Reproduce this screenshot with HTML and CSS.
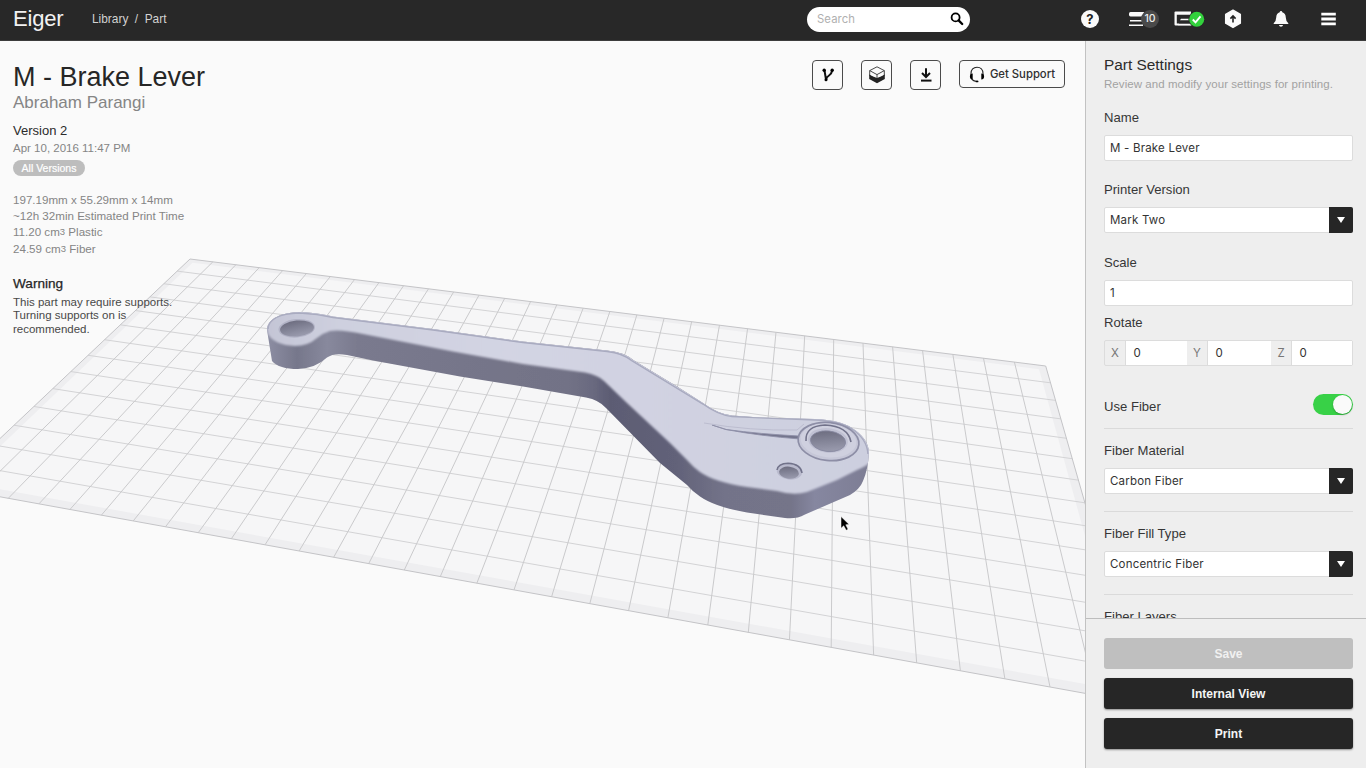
FILE: index.html
```html
<!DOCTYPE html>
<html lang="en">
<head>
<meta charset="utf-8">
<title>Eiger - M - Brake Lever</title>
<link rel="stylesheet" href="styles.css">
</head>
<body>
<header class="topbar">
  <div class="brand">Eiger</div>
  <nav class="crumbs"><span>Library</span><span>/</span><span>Part</span></nav>
  <div class="search"><span>Search</span>
    <svg width="14" height="14" viewBox="0 0 14 14"><circle cx="5.6" cy="5.4" r="4" fill="none" stroke="#000" stroke-width="1.8"/><path d="M8.6 8.4 12.2 12" stroke="#000" stroke-width="2.3" stroke-linecap="round"/></svg>
  </div>
  <div class="tools">
    <div class="help">?</div>
    <div class="queue">
      <svg width="16" height="16" viewBox="0 0 16 16" fill="#fafafa"><path d="M1.5 1H15v2.8L13.5 5.600H1.500Q0 5.600 0 3.800V2.500Q0 1 1.500 1Z"/><path d="M1 9h13v1.400H1zM0 13.500h14v1.500H0z"/></svg>
      <span class="badge">10</span>
    </div>
    <svg class="printer" width="31" height="18" viewBox="0 0 31 18"><path d="M1.500 1.500H17v14H1.500q-1 0-1-1V2.500q0-1 1-1Z" fill="#fafafa"/><path d="M2.800 4.700H16v10H5.500l-1-1.200H2.800z" fill="#282828"/><path d="M7 8.700h9v1.500H6zM4 13.700h14v1.500H4z" fill="#fafafa"/><circle cx="22.700" cy="9.200" r="8.200" fill="#282828"/><circle cx="22.700" cy="9.200" r="7.500" fill="#32d13c"/><path d="m18.800 9.500 2.700 2.800 5-5.900" fill="none" stroke="#fff" stroke-width="1.900"/></svg>
    <svg class="hex" width="18" height="20" viewBox="0 0 18 20"><path d="M9 1.200 16.300 5.400v8.800L9 18.400 1.700 14.200V5.400Z" fill="#fafafa" stroke="#fafafa" stroke-width="1.500" stroke-linejoin="round"/><path d="M9 13.500V7.500M6.400 9.600 9 6.900l2.600 2.700" fill="none" stroke="#222" stroke-width="1.600"/></svg>
    <svg class="bell" width="16" height="18" viewBox="0 0 16 18" fill="#fafafa"><path d="M8 1q1.200 0 1.300 1.300Q12.600 3.400 12.800 7.500q.1 4 2.500 5.700v.9H.7v-.9q2.400-1.700 2.500-5.700Q3.400 3.400 6.700 2.300 6.800 1 8 1ZM5.900 15h4.200Q9.600 16.800 8 16.800T5.900 15Z"/></svg>
    <svg class="menu" width="15" height="14" viewBox="0 0 15 14" fill="#fff"><path d="M.3.800h14.500v2.800H.3zM.3 5.600h14.500v2.800H.3zM.3 10.400h14.500v2.800H.3z"/></svg>
  </div>
</header>
<main class="workspace">
  <section class="viewer">
    <svg class="scene" width="1085" height="727" viewBox="0 41 1085 727">
      <defs>
        <linearGradient id="side" gradientUnits="userSpaceOnUse" x1="267" y1="0" x2="869" y2="0">
          <stop offset="0" stop-color="#8d8ea3"/><stop offset=".05" stop-color="#76778b"/><stop offset=".1" stop-color="#88899d"/><stop offset=".15" stop-color="#7a7a8e"/><stop offset=".5" stop-color="#727286"/><stop offset=".54" stop-color="#6a6a80"/><stop offset=".57" stop-color="#5c5c73"/><stop offset=".68" stop-color="#626279"/><stop offset=".76" stop-color="#737389"/><stop offset=".87" stop-color="#747489"/><stop offset=".91" stop-color="#8687a0"/><stop offset="1" stop-color="#7d7d94"/>
        </linearGradient>
        <linearGradient id="face" gradientUnits="userSpaceOnUse" x1="267" y1="0" x2="869" y2="0"><stop offset="0" stop-color="#c4c5d6"/><stop offset=".12" stop-color="#ced0df"/><stop offset=".4" stop-color="#d3d4e3"/><stop offset="1" stop-color="#cdcfdf"/></linearGradient>
        <linearGradient id="hole" x1="0" y1="0" x2=".3" y2="1"><stop offset="0" stop-color="#68687b"/><stop offset=".6" stop-color="#848598"/><stop offset="1" stop-color="#9798ab"/></linearGradient>
        <filter id="soft" x="-5%" y="-5%" width="110%" height="110%"><feGaussianBlur stdDeviation="1.300"/></filter>
        <filter id="fine" x="-20%" y="-20%" width="140%" height="140%"><feGaussianBlur stdDeviation=".6"/></filter>
        <clipPath id="body"><path id="outline" d="M267 330C267 319 281 312 302 312Q320 313 333 316.500L433 329 523 341.500 607 350.500Q624 352 634 360.500L677 386.500 703 403Q718 414 732 415.500L760 417.500 815 419Q840 420 852 428 868 438 869 452 868 470 863 481 860 489 850 495L805 514.500Q796 519.500 785 518L747 512.500Q715 507 700 496.500 692 491 687 485L660 463 606 408Q599 400 586 397.500L523 386.500 460 376.500 373 360.500 347 355Q334 352.500 327 357.500 316 368 298 369 279 369 272 361Z"/></clipPath>
      </defs>
      <g id="bed"></g>
      <use href="#outline" fill="url(#side)" filter="url(#fine)"/>
      <g clip-path="url(#body)">
        <path d="M262 305H640L720 395 875 410V458Q868 466 857 470L837 480 807 492Q794 496 777 491L747 487Q714 482 700 472 693 467 687 460L670 443 627 403 604 381Q598 375 585 372.500L523 364 453 351.500 363 334Q340 329 330 331 323 333 317 338 308 346 295 346 274 345 268 334Z" fill="url(#face)" filter="url(#soft)"/>
        <path d="M268 329Q269 314 299 313 318 314 333 317.500L433 330 523 342.500 607 351.500Q623 353 633 361.500L703 404Q718 415 732 416.500L815 420Q840 421 852 429 867 439 868 454" fill="none" stroke="#a9abc0" stroke-width="1.500" filter="url(#fine)"/>
      </g>
      <g filter="url(#fine)">
        <ellipse cx="296.700" cy="328.300" rx="18.300" ry="9.300" fill="#b2b3c6" transform="rotate(-5 296.700 328.300)"/>
        <ellipse cx="297" cy="328.500" rx="17" ry="8" fill="url(#hole)" transform="rotate(-5 297 328.500)"/>
        <path d="M712 425 726 429.500Q760 436 800 439L799 436Q760 434 726 429.500Z" fill="#73748c" stroke="#8f90a8" stroke-width=".9"/>
        <path d="M704 423Q750 431 797 430L804 424" fill="none" stroke="#bcbdcf" stroke-width="1"/>
        <ellipse cx="828.500" cy="441.500" rx="30.500" ry="19" transform="rotate(6 828.500 441.500)" fill="#c6c7d8" stroke="#8d8ea6" stroke-width="1.700"/>
        <ellipse cx="828.500" cy="440.500" rx="28" ry="16.800" transform="rotate(6 828.500 440.500)" fill="#cfd0df"/>
        <path d="M806 441Q805 426 825 425 848 426 851 442" fill="none" stroke="#71728a" stroke-width="1.600"/>
        <ellipse cx="828" cy="440.500" rx="20" ry="12.300" transform="rotate(6 828 440.500)" fill="#c0c1d3"/>
        <ellipse cx="828" cy="441.200" rx="17.700" ry="10.300" transform="rotate(6 828 441.200)" fill="url(#hole)" stroke="#8788a0" stroke-width=".8"/>
        <ellipse cx="789.500" cy="471.300" rx="12.800" ry="8.300" transform="rotate(7 789.500 471.300)" fill="#b9bacd"/>
        <path d="M777 470Q778 463.500 788 463.200 801 464 802 473" fill="none" stroke="#71728a" stroke-width="1.500"/>
        <ellipse cx="789" cy="472.700" rx="10" ry="6" transform="rotate(7 789 472.700)" fill="url(#hole)"/>
      </g>
      <path d="M841 516.500v11.800l2.700-2.500 2.500 4.500 1.900-1-2.300-4.500 3.300-.4Z" fill="#000" stroke="#fff" stroke-width=".5"/>
    </svg>
    <div class="info">
      <h1>M - Brake Lever</h1>
      <div class="author">Abraham Parangi</div>
      <div class="version">Version 2</div>
      <div class="date">Apr 10, 2016 11:47 PM</div>
      <a class="pill">All Versions</a>
      <div class="stats">
        <div>197.19mm x 55.29mm x 14mm</div>
        <div>~12h 32min Estimated Print Time</div>
        <div>11.20 cm<sup>3</sup> Plastic</div>
        <div>24.59 cm<sup>3</sup> Fiber</div>
      </div>
      <div class="warning">Warning</div>
      <p>This part may require supports. Turning supports on is recommended.</p>
    </div>
    <div class="actions">
      <button class="action"><svg width="16" height="16" viewBox="0 0 16 16"><path d="M4.500 3.500 6 12.500M12 4Q11.500 7 9 8.500 6.500 10 6 12.700" fill="none" stroke="#111" stroke-width="2"/><circle cx="4.200" cy="3.200" r="1.700"/><circle cx="12.200" cy="3.200" r="1.700"/><circle cx="6" cy="12.700" r="1.500"/></svg></button>
      <button class="action"><svg width="18" height="18" viewBox="0 0 18 18"><path d="M9 .8 16.300 4.600 9 8.600 1.700 4.600ZM1.700 4.600v5L9 13.500l7.300-3.900v-5M9 8.600v4.800" fill="#fafafa" stroke="#333" stroke-width=".9"/><path d="M1.200 8.400 5 10.500 9 12l4-1.500 3.800-2.100V13L9 17.300 1.200 13Z" fill="#222"/></svg></button>
      <button class="action"><svg width="14" height="16" viewBox="0 0 14 16"><path d="M7 1.200v8M3 6l4 4 4-4" fill="none" stroke="#111" stroke-width="2"/><path d="M2 13.600h10.500" stroke="#111" stroke-width="2"/></svg></button>
      <button class="support"><svg width="16" height="17" viewBox="0 0 16 17"><path d="M2 9V7.500C2 3.800 4.400 1.200 8 1.200s6 2.600 6 6.300V9M2 11.500Q3 14.600 7 15.300" fill="none" stroke="#222" stroke-width="1.100"/><path d="M3.700 7.500v6Q.9 13.300.9 10.500T3.700 7.500ZM12.300 7.500v6q2.800-.2 2.800-3T12.300 7.500Z"/><ellipse cx="8" cy="15.400" rx="1.500" ry=".9"/></svg>Get Support</button>
    </div>
  </section>
  <aside class="panel">
    <div class="settings">
      <h2>Part Settings</h2>
      <div class="hint">Review and modify your settings for printing.</div>
      <label class="name-label">Name</label>
      <div class="field">M - Brake Lever</div>
      <label class="spaced">Printer Version</label>
      <div class="field select">Mark Two<i></i></div>
      <label class="spaced scale">Scale</label>
      <div class="field">1</div>
      <label class="rotate-label">Rotate</label>
      <div class="rotate"><b>X</b><span>0</span><b>Y</b><span>0</span><b>Z</b><span>0</span></div>
      <div class="toggle-row"><label>Use Fiber</label><div class="toggle"></div></div>
      <div class="group"><label>Fiber Material</label><div class="field select">Carbon Fiber<i></i></div></div>
      <div class="group"><label>Fiber Fill Type</label><div class="field select">Concentric Fiber<i></i></div></div>
      <div class="group"><label>Fiber Layers</label></div>
    </div>
    <div class="footer">
      <button class="disabled">Save</button>
      <button>Internal View</button>
      <button>Print</button>
    </div>
  </aside>
</main>
<script src="bed.js"></script>
</body>
</html>
```

FILE: styles.css
```css
* { box-sizing: border-box; }
body { margin: 0; width: 1366px; height: 768px; overflow: hidden; background: #fafafa; color: #2b2b2b; font-family: "Liberation Sans", Arial, sans-serif; font-size: 11.5px; }
svg { display: block; flex: none; }
h1, h2, p { margin: 0; font-weight: 400; }
button { font-family: inherit; padding: 0; }

.topbar { height: 41px; background: #282828; border-bottom: 1px solid #3c3c3c; display: flex; align-items: center; color: #ddd; padding: 0 30px 2px 13px; }
.brand { width: 79px; font-size: 22px; letter-spacing: -.2px; color: #f2f2f2; }
.crumbs { display: flex; gap: 6.5px; font-size: 11.9px; color: #d2d2d2; width: 715px; }
.search { width: 163px; height: 25px; border-radius: 13px; background: #fff; display: flex; align-items: center; justify-content: space-between; padding: 0 6px 0 10px; font: 11.3px Inter, sans-serif; letter-spacing: .1px; color: #b0b0b0; }
.tools { margin-left: auto; display: flex; align-items: center; }
.help { width: 18px; height: 18px; border-radius: 50%; background: #fafafa; color: #222; font: 700 13px/18px Inter, sans-serif; text-align: center; margin-right: 30px; }
.queue { display: flex; align-items: center; margin-right: 15px; }
.badge { width: 18px; height: 18px; margin-left: -4px; border-radius: 50%; background: #4a4a4a; color: #eee; font: 500 10.5px/18px Inter, sans-serif; text-align: center; }
.printer { margin-right: 19px; }
.hex { margin-right: 31px; }
.bell { margin-right: 32px; }

.workspace { display: flex; height: 727px; }
.viewer { position: relative; width: 1085px; display: flex; justify-content: space-between; align-items: flex-start; padding: 19px 20px 0 13px; }
.scene { position: absolute; left: 0; top: 0; }
.info { position: relative; width: 200px; color: #858585; padding-top: 2px; }
h1 { font-size: 27px; line-height: 30px; color: #262626; white-space: nowrap; }
.author { font-size: 17px; line-height: 22px; }
.version { font-size: 13px; line-height: 16px; color: #2b2b2b; margin-top: 9px; }
.date { line-height: 16px; margin-top: 1px; }
.pill { display: block; width: 72px; height: 16px; border-radius: 8px; background: #bdbdbd; color: #fff; font-size: 10.5px; line-height: 16px; text-align: center; margin-top: 4px; -webkit-text-stroke: .2px #fff; }
.stats { margin-top: 16px; line-height: 16.2px; font-size: 11.6px; }
.stats div { height: 16.2px; white-space: nowrap; }
sup { font-size: 9.5px; line-height: 0; vertical-align: 1px; }
.warning { font-size: 13.600px; line-height: 18px; color: #262626; margin-top: 18px; -webkit-text-stroke: .25px #262626; }
.info p { width: 165px; line-height: 13.5px; color: #484848; margin-top: 3px; }
.actions { position: relative; display: flex; gap: 18px; align-items: flex-start; }
.actions button { height: 30px; border: 1px solid #4b4b4b; border-radius: 4px; background: transparent; display: flex; align-items: center; justify-content: center; }
.actions .action { width: 31px; }
.actions .support { width: 106px; height: 28px; gap: 5px; font: 500 11.3px Inter, sans-serif; color: #303030; }

.panel { width: 281px; border-left: 1px solid #c2c2c2; background: #eee; display: flex; flex-direction: column; }
.settings { height: 577px; overflow: hidden; padding: 15px 13px 0 18px; }
h2 { font-size: 15.4px; line-height: 18px; }
.hint { line-height: 16px; font-size: 11.5px; letter-spacing: .06px; color: #a2a2a2; margin-top: 2px; white-space: nowrap; }
label { display: block; font-size: 13.1px; line-height: 16px; color: #363636; }
.name-label { margin-top: 18px; }
.spaced { margin-top: 21px; }
.scale { margin-top: 22px; }
.field { height: 26px; margin-top: 9px; background: #fff; border: 1px solid #dcdcdc; border-radius: 2px; padding-left: 5px; font: 11.5px/24px Inter, sans-serif; letter-spacing: .2px; color: #333; }
.select { display: flex; justify-content: space-between; }
.select i { width: 24px; height: 26px; margin: -1px -1px 0 0; background: #262626; border-radius: 0 2px 2px 0; display: flex; align-items: center; justify-content: center; }
.select i::before { content: ""; border: 4px solid transparent; border-top: 6px solid #fff; border-bottom: 0; }
.rotate-label { margin-top: 9px; }
.rotate { height: 26px; margin-top: 9px; border: 1px solid #dcdcdc; border-radius: 2px; display: grid; grid-template-columns: 21px 61px 21px 63px 21px 1fr; font: 11.5px/24px Inter, sans-serif; }
.rotate b { font-weight: 400; color: #777; text-align: center; border-right: 1px solid #dcdcdc; }
.rotate span { background: #fff; padding-left: 7.500px; color: #333; }
.toggle-row { height: 62px; padding-top: 28px; display: flex; justify-content: space-between; }
.toggle-row label { padding-top: 5px; }
.toggle { width: 40px; height: 21px; border-radius: 11px; background: #38d147; padding: 1px; display: flex; justify-content: flex-end; }
.toggle::before { content: ""; width: 19px; height: 19px; border-radius: 50%; background: #fafafa; box-shadow: 0 1px 2px #0004; }
.group { height: 83px; border-top: 1px solid #dadada; padding-top: 14px; }
.footer { flex: 1; border-top: 1px solid #bdbdbd; padding: 19px 13px 0 18px; display: flex; flex-direction: column; gap: 9px; }
.footer button { height: 31px; border: 0; border-radius: 3px; background: #262626; color: #f5f5f5; font-size: 12px; font-weight: 700; box-shadow: 0 1px 2px #0006; }
.footer .disabled { background: #bfbfbf; color: #f1f1f1; box-shadow: none; }
```

FILE: bed.js
```js
// Perspective mapping of the 32 x 14 print bed onto the viewer.
var pairs = [[0, 0, 190, 259], [32, 0, 1045.7, 366], [30, 14, 1050, 687], [2, 14, 8.3, 498.3]];
var rows = [];
pairs.forEach(function (p) {
  var u = p[0], v = p[1], x = p[2], y = p[3];
  rows.push([u, v, 1, 0, 0, 0, -u * x, -v * x, x]);
  rows.push([0, 0, 0, u, v, 1, -u * y, -v * y, y]);
});
for (var i = 0; i < 8; i++) {
  var best = i;
  for (var k = i + 1; k < 8; k++) if (Math.abs(rows[k][i]) > Math.abs(rows[best][i])) best = k;
  var swap = rows[i]; rows[i] = rows[best]; rows[best] = swap;
  for (var r = 0; r < 8; r++) {
    if (r === i) continue;
    var f = rows[r][i] / rows[i][i];
    for (var c = i; c < 9; c++) rows[r][c] -= f * rows[i][c];
  }
}
var h = rows.map(function (row, n) { return row[8] / row[n]; });
function project(u, v) {
  var w = h[6] * u + h[7] * v + 1;
  return ((h[0] * u + h[1] * v + h[2]) / w).toFixed(2) + " " + ((h[3] * u + h[4] * v + h[5]) / w).toFixed(2);
}
function quad(a, b, c, d) {
  return "M" + project(a, b) + "L" + project(c, b) + "L" + project(c, d) + "L" + project(a, d) + "Z";
}
function line(a, b, c, d) { return "M" + project(a, b) + "L" + project(c, d); }
var across = "", down = "";
for (var v = 1; v < 14; v++) across += line(0, v, 32, v);
for (var u = 1; u < 32; u++) down += line(u, 0, u, 14);
document.getElementById("bed").innerHTML =
  '<path fill="#f6f6f7" d="' + quad(0, 0, 32, 14) + '"/>' +
  '<path fill="#eeeef0" d="' + quad(0, 13.72, 32, 14) + quad(0, 0, 32, 0.25) + quad(0, 0, 0.25, 14) + quad(31.75, 0, 32, 14) + '"/>' +
  '<path fill="none" stroke="#d3d3d5" d="' + across + '"/>' +
  '<path fill="none" stroke="#cacacc" d="' + down + '"/>' +
  '<path fill="none" stroke="#c4c4c7" d="' + quad(0, 0, 32, 14) + '"/>';
```
